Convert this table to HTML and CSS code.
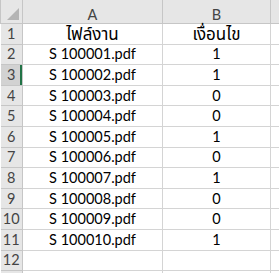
FILE: index.html
```html
<!DOCTYPE html>
<html lang="th">
<head>
    <meta charset="UTF-8">
    <title>ไฟล์งาน</title>
    <link rel="stylesheet" href="styles.css">
</head>
<body>
    <table class="sheet">
        <colgroup>
            <col class="col-head">
            <col class="col-a">
            <col class="col-b">
            <col class="col-c">
        </colgroup>
        <thead>
            <tr>
                <th class="corner"><span class="select-all"></span></th>
                <th>A</th>
                <th>B</th>
                <th></th>
            </tr>
        </thead>
        <tbody>
            <tr><th>1</th><td class="thai">ไฟล์งาน</td><td class="thai">เงื่อนไข</td><td></td></tr>
            <tr><th>2</th><td>S 100001.pdf</td><td>1</td><td></td></tr>
            <tr class="active"><th>3</th><td>S 100002.pdf</td><td>1</td><td></td></tr>
            <tr><th>4</th><td>S 100003.pdf</td><td>0</td><td></td></tr>
            <tr><th>5</th><td>S 100004.pdf</td><td>0</td><td></td></tr>
            <tr><th>6</th><td>S 100005.pdf</td><td>1</td><td></td></tr>
            <tr><th>7</th><td>S 100006.pdf</td><td>0</td><td></td></tr>
            <tr><th>8</th><td>S 100007.pdf</td><td>1</td><td></td></tr>
            <tr><th>9</th><td>S 100008.pdf</td><td>0</td><td></td></tr>
            <tr><th>10</th><td>S 100009.pdf</td><td>0</td><td></td></tr>
            <tr><th>11</th><td>S 100010.pdf</td><td>1</td><td></td></tr>
            <tr><th>12</th><td></td><td></td><td></td></tr>
            <tr><th></th><td></td><td></td><td></td></tr>
        </tbody>
    </table>
</body>
</html>
```

FILE: styles.css
```css
body {
    margin: 0;
    background-color: #fff;
    font-family: Lato, "Noto Sans Thai", "Noto Sans", sans-serif;
    overflow: hidden;
}
.sheet {
    border-collapse: collapse;
    table-layout: fixed;
    width: 300px;
    font-size: 14.5px;
    color: #000;
}
.col-head { width: 22px; }
.col-a { width: 140px; }
.col-b { width: 108px; }
.col-c { width: 30px; }
.sheet th,
.sheet td {
    height: 19.6px;
    padding: 0;
    border: 1px solid #d4d4d4;
    text-align: center;
    white-space: nowrap;
    overflow: hidden;
    line-height: 16px;
}
.sheet td.thai {
    font-size: 17px;
    overflow: visible;
}
.sheet thead th {
    height: 16px;
    padding-top: 7px;
    line-height: 14px;
    background-color: #e6e6e6;
    color: #444;
    font-weight: normal;
    border-color: #c6c6c6;
    border-top: none;
}
.sheet tbody th {
    background-color: #e6e6e6;
    color: #444;
    font-weight: normal;
    border-color: #c6c6c6;
    border-left: none;
}
.sheet tr.active th {
    background-color: #d2d2d2;
    box-shadow: inset -2px 0 0 #217346;
}
.corner {
    position: relative;
}
/* small grey triangle in the select-all corner */
.select-all {
    position: absolute;
    right: 3px;
    bottom: 3px;
    width: 0;
    height: 0;
    border-left: 12px solid transparent;
    border-bottom: 12px solid #b4b4b4;
}
```
